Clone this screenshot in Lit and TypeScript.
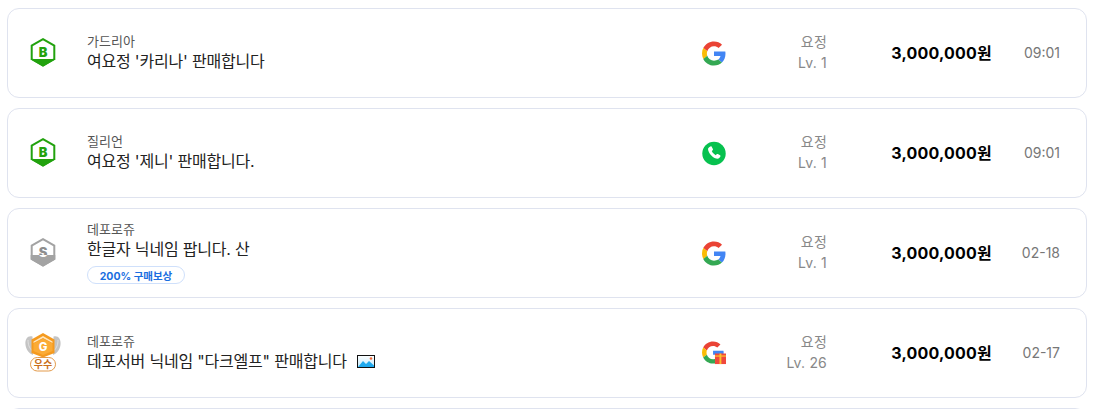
import { LitElement, html, css, svg } from "lit";
import { customElement } from "lit/decorators.js";

type Row = {
  seller: string;
  title: string;
  badge: "B" | "S" | "G";
  channel: "google" | "phone" | "gift";
  level: string;
  time: string;
  tag?: string;
  image?: boolean;
};

const rows: Row[] = [
  { seller: "가드리아", title: "여요정 '카리나' 판매합니다", badge: "B", channel: "google", level: "Lv. 1", time: "09:01" },
  { seller: "질리언", title: "여요정 '제니' 판매합니다.", badge: "B", channel: "phone", level: "Lv. 1", time: "09:01" },
  { seller: "데포로쥬", title: "한글자 닉네임 팝니다. 산", badge: "S", channel: "google", level: "Lv. 1", time: "02-18", tag: "200% 구매보상" },
  { seller: "데포로쥬", title: '데포서버 닉네임 "다크엘프" 판매합니다', badge: "G", channel: "gift", level: "Lv. 26", time: "02-17", image: true },
];

const googleG = svg`
  <path fill="#EA4335" d="M24 9.5c3.54 0 6.71 1.22 9.21 3.6l6.85-6.85C35.9 2.38 30.47 0 24 0 14.62 0 6.51 5.38 2.56 13.22l7.98 6.19C12.43 13.72 17.74 9.5 24 9.5z"/>
  <path fill="#4285F4" d="M46.98 24.55c0-1.57-.15-3.09-.38-4.55H24v9.02h12.94c-.58 2.96-2.26 5.48-4.78 7.18l7.73 6c4.51-4.18 7.09-10.36 7.09-17.65z"/>
  <path fill="#FBBC05" d="M10.53 28.59c-.48-1.45-.76-2.99-.76-4.59s.27-3.14.76-4.59l-7.98-6.19C.92 16.46 0 20.12 0 24c0 3.88.92 7.54 2.56 10.78l7.97-6.19z"/>
  <path fill="#34A853" d="M24 48c6.48 0 11.93-2.13 15.89-5.81l-7.73-6c-2.15 1.45-4.92 2.3-8.16 2.3-6.26 0-11.57-4.22-13.47-9.91l-7.98 6.19C6.51 42.62 14.62 48 24 48z"/>`;

@customElement("app-root")
export class AppRoot extends LitElement {
  static styles = css`
    :host {
      display: block;
      font-family: Inter, "Noto Sans CJK KR", sans-serif;
      background: #fff;
      height: 409px;
      overflow: hidden;
    }
    .list {
      display: flex;
      flex-direction: column;
      gap: 10px;
      padding: 8px 8px 0 7px;
    }
    .card {
      box-sizing: border-box;
      height: 90px;
      flex: none;
      display: flex;
      align-items: center;
      border: 1px solid #dfe3ef;
      border-radius: 12px;
      background: #fff;
      padding: 0 26px 2px 12px;
    }
    .badge {
      flex: none;
      width: 46px;
      display: flex;
      justify-content: center;
      align-items: center;
    }
    .badge svg { display: block; }
    .body {
      flex: 1;
      min-width: 0;
      margin-left: 21px;
    }
    .seller {
      font-size: 13px;
      line-height: 18px;
      color: #555;
    }
    .title {
      display: flex;
      align-items: center;
      gap: 10px;
      font-size: 16px;
      letter-spacing: -0.2px;
      line-height: 22px;
      color: #222;
    }
    .tag {
      box-sizing: border-box;
      margin-top: 6px;
      width: 98px;
      height: 18px;
      display: flex;
      align-items: center;
      justify-content: center;
      border: 1px solid #cfe0fb;
      border-radius: 9px;
      font-size: 10.5px;
      font-weight: 700;
      color: #1a6ee0;
    }
    .channel {
      flex: none;
      width: 24px;
      height: 25px;
      margin-top: 2px;
      display: block;
    }
    .level {
      flex: none;
      width: 101px;
      text-align: right;
      font-size: 14px;
      letter-spacing: 0.2px;
      line-height: 21px;
      color: #888;
    }
    .price {
      flex: none;
      width: 165px;
      text-align: right;
      font-size: 16px;
      letter-spacing: 0.2px;
      font-weight: 700;
      color: #000;
    }
    .time {
      flex: none;
      width: 68px;
      text-align: right;
      font-size: 14px;
      color: #777;
    }
    .pic {
      flex: none;
      display: block;
    }
  `;

  private badge(b: Row["badge"]) {
    if (b === "G") {
      return html`<svg width="36" height="39" viewBox="0 0 36 39">
        <path d="M7.5 3.5 C3 2 0 6 .4 11 C.8 16.5 4 20.5 8 22Z" fill="#c4c4c4"/>
        <path d="M3 7 C3 11 4 15 7.5 18" fill="none" stroke="#e6e6e6" stroke-width=".8"/>
        <path d="M28.5 3.5 C33 2 36 6 35.6 11 C35.2 16.5 32 20.5 28 22Z" fill="#c4c4c4"/>
        <path d="M33 7 C33 11 32 15 28.5 18" fill="none" stroke="#e6e6e6" stroke-width=".8"/>
        <path d="M18 0 L29.5 6.5 V20 L18 24.5 L6.5 20 V6.5Z" fill="#f59a1f"/>
        <path d="M18 3 L27.5 8.4 V10 L18 5 L8.5 10 V8.4Z" fill="#ffe6bd"/>
        <path d="M8.5 10.5 L18 5.5 L27.5 10.5 V18 L18 22 L8.5 18Z" fill="#fbab36"/>
        <text x="18" y="17.5" text-anchor="middle" font-size="11.5" font-weight="800" fill="#fff" font-family="Inter, sans-serif">G</text>
        <rect x="5.5" y="24.5" width="25" height="13.5" rx="6.75" fill="#fff" stroke="#e39a4a"/>
        <text x="18" y="35" text-anchor="middle" font-size="10" font-weight="700" fill="#c9701a" font-family="'Noto Sans CJK KR', sans-serif">우수</text>
      </svg>`;
    }
    const c = b === "B" ? "#22a20e" : "#a3a3a3";
    const fillTop = b === "B" ? 21 : 17;
    const id = `clip-${b}`;
    return html`<svg width="26" height="29" viewBox="0 0 26 29">
      <defs>
        ${svg`<clipPath id=${id}><rect x="0" y=${fillTop} width="26" height="12"/></clipPath>`}
      </defs>
      <path d="M13 1.2 L24.3 7.6 V21 L13 27.6 L1.7 21 V7.6Z" fill="#fff" stroke=${c} stroke-width="2"/>
      <path d="M.7 ${fillTop} H25.3 V21.6 L13 28.6 L.7 21.6Z" fill=${c}/>
      <text x="13" y="18.7" text-anchor="middle" font-size="13" font-weight="900" fill=${b === "B" ? c : "#8e8e8e"} font-family="Inter, sans-serif">${b}</text>
      ${b === "S"
        ? svg`<g clip-path="url(#${id})"><text x="13" y="18.7" text-anchor="middle" font-size="13" font-weight="900" fill="#fff" font-family="Inter, sans-serif">S</text></g>`
        : ""}
    </svg>`;
  }

  private channel(ch: Row["channel"]) {
    if (ch === "phone") {
      return html`<svg class="channel" viewBox="0 0 25 25">
        <circle cx="12.5" cy="12.5" r="12.2" fill="#07c14f"/>
        <g transform="translate(12.5 12.5) scale(1.15) translate(-12.5 -12.5)">
          <path fill="#fff" d="M9.3 6.2c.4-.3.9-.2 1.1.2l1.1 2c.2.4.1.8-.2 1.1l-.8.7c.5 1.3 2 3 3.6 3.8l.8-.8c.3-.3.8-.4 1.1-.2l2 1.1c.4.2.5.7.3 1.1-.6 1-1.4 2.1-2.6 2.1-1.6 0-3.8-1.1-5.6-3-1.8-1.8-3-4.3-3-5.7 0-1 .9-1.8 2.2-2.4z"/>
        </g>
      </svg>`;
    }
    if (ch === "gift") {
      return html`<svg class="channel" viewBox="0 0 25 25">
        <g transform="scale(.48)">${googleG}</g>
        <rect x="13.5" y="12.5" width="11.5" height="11" fill="#f0483e"/>
        <rect x="13.5" y="14.5" width="11.5" height="1.3" fill="#fbc02d"/>
        <rect x="18.2" y="12.5" width="2" height="11" fill="#fbc02d"/>
      </svg>`;
    }
    return html`<svg class="channel" viewBox="0 0 48 48">${googleG}</svg>`;
  }

  render() {
    return html`<div class="list">
      ${rows.map(
        (r) => html`<div class="card">
          <div class="badge">${this.badge(r.badge)}</div>
          <div class="body">
            <div class="seller">${r.seller}</div>
            <div class="title">
              <span>${r.title}</span>
              ${r.image
                ? html`<svg class="pic" width="18" height="13" viewBox="0 0 18 13">
                    <defs><linearGradient id="sky" x1="0" y1="0" x2="0" y2="1">
                      <stop offset="0" stop-color="#fff"/><stop offset="1" stop-color="#bfe8fb"/>
                    </linearGradient></defs>
                    <rect x=".5" y=".5" width="17" height="12" fill="url(#sky)" stroke="#111"/>
                    <circle cx="14" cy="3.5" r="1.3" fill="#f26b3a"/>
                    <path d="M1 12 L6 6 L9 9 L12 6 L17 10.5 V12Z" fill="#1fa9ee"/>
                  </svg>`
                : ""}
            </div>
            ${r.tag ? html`<div class="tag">${r.tag}</div>` : ""}
          </div>
          ${this.channel(r.channel)}
          <div class="level"><div>요정</div><div>${r.level}</div></div>
          <div class="price">3,000,000원</div>
          <div class="time">${r.time}</div>
        </div>`
      )}
      <div class="card"></div>
    </div>`;
  }
}
